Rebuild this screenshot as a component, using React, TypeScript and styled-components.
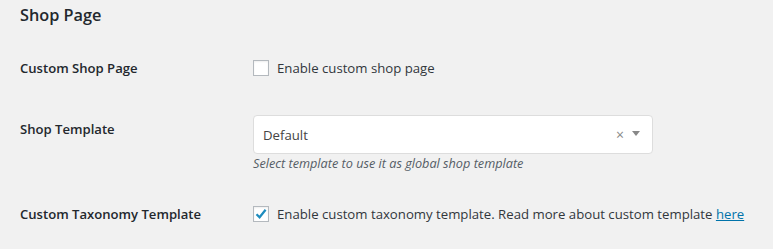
import React from "react";
import styled, { createGlobalStyle } from "styled-components";

const Global = createGlobalStyle`
  html, body {
    margin: 0;
    padding: 0;
    background: #f1f1f1;
  }
  body {
    font-family: "Open Sans", "Noto Sans", sans-serif;
    font-size: 13px;
    color: #23282d;
  }
`;

const Wrap = styled.div`
  padding: 0 20px;
`;

const Heading = styled.h2`
  margin: 0;
  box-sizing: border-box;
  padding-top: 3px;
  font-size: 16.3px;
  font-weight: 600;
  line-height: 24px;
  height: 40px;
`;

const Table = styled.div`
  display: grid;
  grid-template-columns: 233px 1fr;
`;

const Label = styled.div<{ $h: number; $top?: number }>`
  height: ${(p) => p.$h}px;
  box-sizing: border-box;
  display: flex;
  align-items: ${(p) => (p.$top ? "flex-start" : "center")};
  padding-top: ${(p) => p.$top || 0}px;
  font-weight: 600;
  font-size: 13.1px;
  line-height: 20px;
`;

const Cell = styled.div<{ $h: number; $top?: number }>`
  height: ${(p) => p.$h}px;
  box-sizing: border-box;
  display: flex;
  flex-direction: column;
  justify-content: ${(p) => (p.$top ? "flex-start" : "center")};
  padding-top: ${(p) => p.$top || 0}px;
`;

const CheckRow = styled.label`
  display: flex;
  align-items: center;
  gap: 8px;
  font-size: 13.2px;
  color: #32373c;
`;

const Box = styled.span`
  width: 16px;
  height: 16px;
  flex: none;
  box-sizing: border-box;
  border: 1px solid #b4b9be;
  background: #fff;
  box-shadow: inset 0 1px 2px rgba(0, 0, 0, 0.07);
  display: flex;
  align-items: center;
  justify-content: center;
`;

const Select = styled.div`
  width: 400px;
  height: 39px;
  box-sizing: border-box;
  background: #fff;
  border: 1px solid #ddd;
  border-radius: 4px;
  display: flex;
  align-items: center;
  padding: 0 12px 0 9px;
  color: #444;
  font-size: 13.2px;
`;

const Value = styled.span`
  flex: 1;
`;

const Clear = styled.span`
  color: #888;
  font-size: 14px;
  margin-right: 8px;
`;

const Arrow = styled.span`
  width: 0;
  height: 0;
  border-left: 4px solid transparent;
  border-right: 4px solid transparent;
  border-top: 5px solid #888;
  margin-top: -3px;
`;

const Desc = styled.p`
  margin: 1px 0 0;
  font-style: italic;
  font-size: 12.7px;
  line-height: 17px;
  color: #555d66;
`;

const Link = styled.a`
  color: #0073aa;
  text-decoration: underline;
`;

const Check = ({ on }: { on?: boolean }) => (
  <Box>
    {on && (
      <svg width="14" height="14" viewBox="0 0 14 14">
        <path d="M2.5 7.2 L5.6 10.3 L11.6 2.8" fill="none" stroke="#1e8cbe" strokeWidth="2.2" />
      </svg>
    )}
  </Box>
);

export default function App() {
  return (
    <Wrap>
      <Global />
      <Heading>Shop Page</Heading>
      <Table>
        <Label $h={56}>Custom Shop Page</Label>
        <Cell $h={56}>
          <CheckRow>
            <Check />
            Enable custom shop page
          </CheckRow>
        </Cell>
        <Label $h={90} $top={23}>
          Shop Template
        </Label>
        <Cell $h={90} $top={19}>
          <Select>
            <Value>Default</Value>
            <Clear>×</Clear>
            <Arrow />
          </Select>
          <Desc>Select template to use it as global shop template</Desc>
        </Cell>
        <Label $h={56}>Custom Taxonomy Template</Label>
        <Cell $h={56}>
          <CheckRow>
            <Check on />
            <span>
              Enable custom taxonomy template. Read more about custom template <Link href="#">here</Link>
            </span>
          </CheckRow>
        </Cell>
      </Table>
    </Wrap>
  );
}
